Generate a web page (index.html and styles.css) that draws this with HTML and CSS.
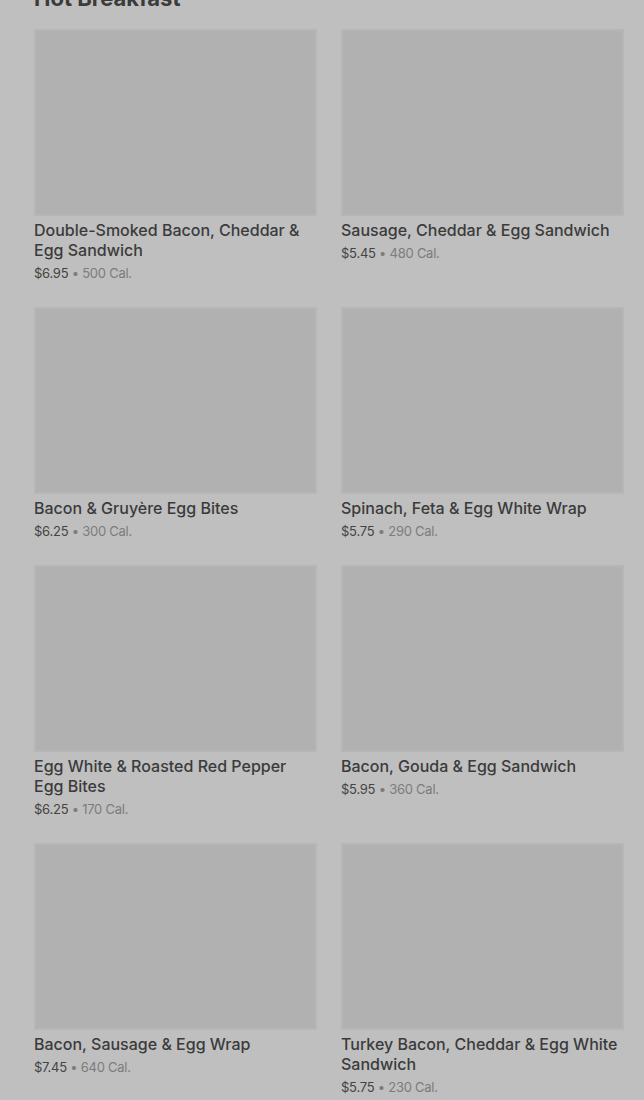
FILE: index.html
```html
<!DOCTYPE html>
<html>
<head>
    <title>Hot Breakfast</title>
    <link rel="stylesheet" href="styles.css">
</head>
<body>
    <div class="menu-section">
        <h2 class="section-title">Hot Breakfast</h2>
        <div class="product-grid">
            <div class="product">
                <div class="product-image"></div>
                <div class="product-name">Double-Smoked Bacon, Cheddar &amp; Egg Sandwich</div>
                <div class="product-info"><span class="price">$6.95</span> <span class="cal">• 500 Cal.</span></div>
            </div>
            <div class="product">
                <div class="product-image"></div>
                <div class="product-name">Sausage, Cheddar &amp; Egg Sandwich</div>
                <div class="product-info"><span class="price">$5.45</span> <span class="cal">• 480 Cal.</span></div>
            </div>
            <div class="product">
                <div class="product-image"></div>
                <div class="product-name">Bacon &amp; Gruyère Egg Bites</div>
                <div class="product-info"><span class="price">$6.25</span> <span class="cal">• 300 Cal.</span></div>
            </div>
            <div class="product">
                <div class="product-image"></div>
                <div class="product-name">Spinach, Feta &amp; Egg White Wrap</div>
                <div class="product-info"><span class="price">$5.75</span> <span class="cal">• 290 Cal.</span></div>
            </div>
            <div class="product">
                <div class="product-image"></div>
                <div class="product-name">Egg White &amp; Roasted Red Pepper Egg Bites</div>
                <div class="product-info"><span class="price">$6.25</span> <span class="cal">• 170 Cal.</span></div>
            </div>
            <div class="product">
                <div class="product-image"></div>
                <div class="product-name">Bacon, Gouda &amp; Egg Sandwich</div>
                <div class="product-info"><span class="price">$5.95</span> <span class="cal">• 360 Cal.</span></div>
            </div>
            <div class="product">
                <div class="product-image"></div>
                <div class="product-name">Bacon, Sausage &amp; Egg Wrap</div>
                <div class="product-info"><span class="price">$7.45</span> <span class="cal">• 640 Cal.</span></div>
            </div>
            <div class="product">
                <div class="product-image"></div>
                <div class="product-name">Turkey Bacon, Cheddar &amp; Egg White Sandwich</div>
                <div class="product-info"><span class="price">$5.75</span> <span class="cal">• 230 Cal.</span></div>
            </div>
        </div>
    </div>
</body>
</html>
```

FILE: styles.css
```css
body {
    margin: 0;
    padding: 0;
    background: #bfbfbf;
    font-family: Inter, "Noto Sans", sans-serif;
    color: #3b3b3b;
    overflow: hidden;
}
.menu-section {
    padding: 0 20px 0 34px;
}
.section-title {
    font-size: 22px;
    line-height: 28px;
    font-weight: 700;
    color: #3b3b3b;
    margin: -16px 0 17px 0;
}
.product-grid {
    display: grid;
    grid-template-columns: 1fr 1fr;
    column-gap: 24px;
    row-gap: 24px;
    align-items: start;
}
.product-image {
    height: 187px;
    background: #b1b1b1;
    box-shadow: inset 0 0 0 2px #b6b6b6;
    border-radius: 2px;
}
.product-name {
    margin-top: 4px;
    font-size: 16px;
    line-height: 20px;
    font-weight: 500;
    color: #3b3b3b;
}
.product-info {
    margin-top: 3px;
    font-size: 13px;
    line-height: 20px;
    letter-spacing: -0.25px;
}
.price {
    color: #444444;
}
.cal {
    color: #7c7c7c;
}
```
